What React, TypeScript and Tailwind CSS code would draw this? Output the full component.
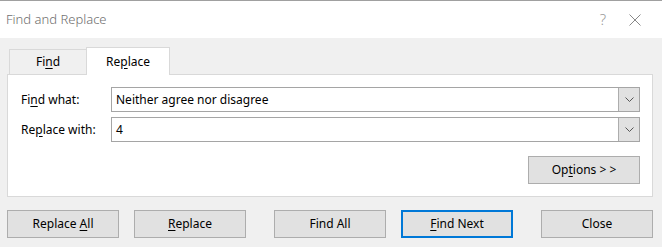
import React from 'react';

const font = { fontFamily: '"Noto Sans", "Open Sans", sans-serif' };

function U({ children }: { children: React.ReactNode }) {
  return <span className="underline underline-offset-2">{children}</span>;
}

function Combo({ value }: { value: string }) {
  return (
    <div className="flex h-[25px] flex-1 items-stretch border border-[#a5a5a5] bg-white">
      <div className="flex flex-1 items-center pl-[4px] text-[12px] text-black">{value}</div>
      <div className="flex w-[21px] items-center justify-center border-l border-[#adadad] bg-[#e1e1e1]">
        <svg width="9" height="5" viewBox="0 0 9 5" fill="none">
          <polyline points="0.5,0.5 4.5,4.5 8.5,0.5" stroke="#555" strokeWidth="1" />
        </svg>
      </div>
    </div>
  );
}

function Btn({ children, primary }: { children: React.ReactNode; primary?: boolean }) {
  return (
    <button
      type="button"
      className={
        primary
          ? 'flex h-[28px] w-[112px] items-center justify-center border-2 border-[#0078d7] bg-[#e1e1e1] text-[12px] text-black'
          : 'flex h-[28px] w-[112px] items-center justify-center border border-[#adadad] bg-[#e1e1e1] text-[12px] text-black'
      }
    >
      <span>{children}</span>
    </button>
  );
}

export default function App() {
  return (
    <div className="flex h-[247px] w-[662px] flex-col overflow-hidden border-t border-[#a0a0a0] bg-[#f0f0f0]" style={font}>
      {/* title bar */}
      <div className="flex h-[37px] items-center bg-white pl-[6px] pr-[21px]">
        <span className="text-[13px] font-light text-[#6f6f6f]">Find and Replace</span>
        <span className="ml-auto text-[15px] font-light text-[#9a9a9a]">?</span>
        <svg className="ml-[23px]" width="12" height="12" viewBox="0 0 12 12" fill="none">
          <path d="M0.5 0.5 L11.5 11.5 M11.5 0.5 L0.5 11.5" stroke="#888" strokeWidth="1" />
        </svg>
      </div>

      {/* tabs */}
      <div className="mt-[9px] flex h-[27px] items-end pl-[9px]">
        <div className="flex h-[25px] w-[77px] items-center justify-center border-l border-t border-[#d9d9d9] text-[12px] text-black">
          <span>
            Fi<U>n</U>d
          </span>
        </div>
        <div className="relative z-10 -mb-px flex h-[28px] w-[84px] items-center justify-center border border-b-0 border-[#d9d9d9] bg-white text-[12px] text-black">
          <span>
            Re<U>p</U>lace
          </span>
        </div>
      </div>

      {/* panel */}
      <div className="mx-[7px] flex h-[123px] w-[646px] flex-col border border-[#d9d9d9] bg-white pl-[13px] pr-[12px] pt-[12px]">
        <div className="flex items-center">
          <span className="w-[90px] text-[12px] text-black">
            Fi<U>n</U>d what:
          </span>
          <Combo value="Neither agree nor disagree" />
        </div>
        <div className="mt-[5px] flex items-center">
          <span className="w-[90px] text-[12px] text-black">
            Re<U>p</U>lace with:
          </span>
          <Combo value="4" />
        </div>
        <div className="mt-[14px] flex justify-end">
          <button
            type="button"
            className="flex h-[28px] w-[112px] items-center justify-center border border-[#adadad] bg-[#e1e1e1] text-[12px] text-black"
          >
            <span>
              Op<U>t</U>ions &gt; &gt;
            </span>
          </button>
        </div>
      </div>

      {/* bottom buttons */}
      <div className="mt-[13px] flex pl-[7px]">
        <Btn>
          Replace <U>A</U>ll
        </Btn>
        <div className="w-[15px]" />
        <Btn>
          <U>R</U>eplace
        </Btn>
        <div className="w-[28px]" />
        <Btn>Find All</Btn>
        <div className="w-[15px]" />
        <Btn primary>
          <U>F</U>ind Next
        </Btn>
        <div className="w-[28px]" />
        <Btn>Close</Btn>
      </div>
    </div>
  );
}
